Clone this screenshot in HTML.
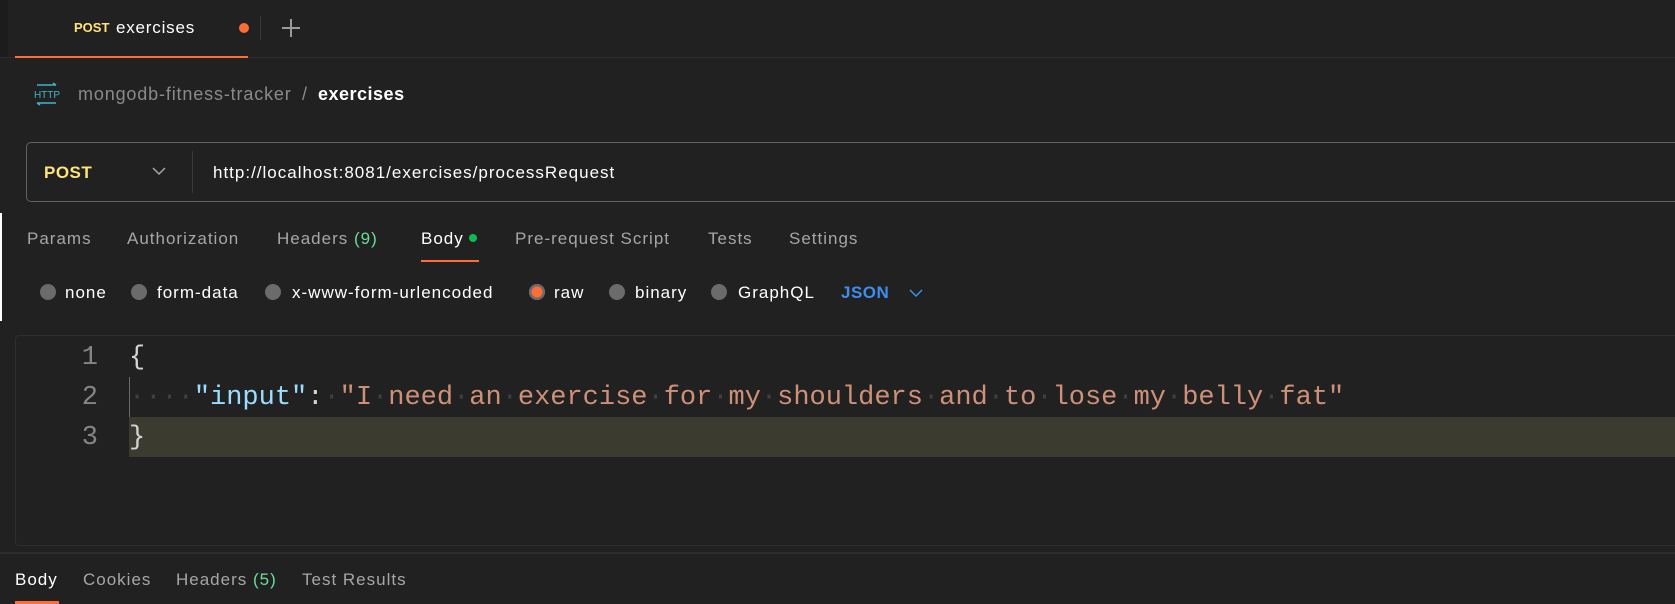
<!DOCTYPE html>
<html><head><meta charset="utf-8"><style>
body{margin:0;width:1675px;height:604px;background:#212121;position:relative;overflow:hidden;font-family:"Liberation Sans",sans-serif;color:#a6a6a6}
.a{position:absolute;white-space:nowrap;line-height:1}
.ui{font-size:17px;letter-spacing:1px}
.rad{position:absolute;width:16px;height:16px;border-radius:50%;background:#6b6b6b;top:284px}
.ln{position:absolute;font-family:"Liberation Mono",monospace;font-size:27px;color:#858585;width:40px;text-align:right;left:58px;line-height:40px}
.code{position:absolute;left:129px;font-family:"Liberation Mono",monospace;font-size:27px;line-height:40px;white-space:pre;color:#d4d4d4}
.d{color:#404040}
</style></head><body>
<div class="a" style="left:0;top:0;width:8px;height:57px;background:#1c1c1c"></div>
<div class="a" style="left:0;top:57px;width:1675px;height:1px;background:#2c2c2c"></div>
<div class="a" style="left:74px;top:21px;font-size:13px;font-weight:bold;color:#ffe47e">POST</div>
<div class="a" style="left:116px;top:19px;font-size:17px;color:#fff;letter-spacing:0.8px">exercises</div>
<div class="a" style="left:239px;top:23px;width:10px;height:10px;border-radius:50%;background:#ff6c37"></div>
<div class="a" style="left:260px;top:16px;width:1px;height:24px;background:#3a3a3a"></div>
<div class="a" style="left:282px;top:27px;width:18px;height:1.5px;background:#9a9a9a"></div>
<div class="a" style="left:290px;top:19px;width:1.5px;height:18px;background:#9a9a9a"></div>
<div class="a" style="left:15px;top:56px;width:233px;height:2px;background:#ff6c37"></div>
<svg class="a" style="left:33px;top:82px" width="28" height="24" viewBox="0 0 28 24"><g stroke="#3fb5c9" stroke-width="1.4" fill="none"><path d="M4 3H23M20 1l3 2"/><path d="M4 21H23M7 23l-3-2"/></g><text x="14" y="16" text-anchor="middle" font-family="Liberation Sans" font-size="10" fill="#3fb5c9">HTTP</text></svg>
<div class="a" style="left:78px;top:85px;font-size:18px;color:#8a8a8a;letter-spacing:0.85px">mongodb-fitness-tracker</div>
<div class="a" style="left:302px;top:85px;font-size:18px;color:#8a8a8a">/</div>
<div class="a" style="left:318px;top:85px;font-size:18px;font-weight:bold;color:#fff;letter-spacing:0.5px">exercises</div>
<div class="a" style="left:26px;top:142px;width:1700px;height:60px;border:1px solid #616161;border-radius:5px;box-sizing:border-box"></div>
<div class="a" style="left:44px;top:164px;font-size:17px;font-weight:bold;color:#ffe47e;letter-spacing:0.5px">POST</div>
<svg class="a" style="left:152px;top:167px" width="14" height="9"><path d="M1 1l6 6 6-6" stroke="#a6a6a6" stroke-width="1.5" fill="none"/></svg>
<div class="a" style="left:192px;top:151px;width:1px;height:42px;background:#3a3a3a"></div>
<div class="a" style="left:213px;top:164px;font-size:17px;color:#fff;letter-spacing:1px">http://localhost:8081/exercises/processRequest</div>
<div class="a" style="left:0;top:213px;width:2px;height:108px;background:#fff"></div>
<div class="a ui" style="left:27px;top:230px">Params</div>
<div class="a ui" style="left:127px;top:230px">Authorization</div>
<div class="a ui" style="left:277px;top:230px">Headers <span style="color:#6bdd9a">(9)</span></div>
<div class="a ui" style="left:421px;top:230px;color:#fff">Body</div>
<div class="a" style="left:469px;top:234px;width:8px;height:8px;border-radius:50%;background:#0cbb52"></div>
<div class="a ui" style="left:515px;top:230px">Pre-request Script</div>
<div class="a ui" style="left:708px;top:230px">Tests</div>
<div class="a ui" style="left:789px;top:230px">Settings</div>
<div class="a" style="left:421px;top:260px;width:58px;height:2px;background:#ff6c37"></div>
<div class="rad" style="left:40px"></div><div class="a ui" style="left:65px;top:284px;color:#fff">none</div>
<div class="rad" style="left:131px"></div><div class="a ui" style="left:157px;top:284px;color:#fff">form-data</div>
<div class="rad" style="left:265px"></div><div class="a ui" style="left:292px;top:284px;color:#fff">x-www-form-urlencoded</div>
<div class="rad" style="left:529px;background:#ff6c37;box-shadow:inset 0 0 0 2.5px #6b6b6b"></div><div class="a ui" style="left:554px;top:284px;color:#fff">raw</div>
<div class="rad" style="left:609px"></div><div class="a ui" style="left:635px;top:284px;color:#fff">binary</div>
<div class="rad" style="left:711px"></div><div class="a ui" style="left:738px;top:284px;color:#fff">GraphQL</div>
<div class="a ui" style="left:841px;top:284px;color:#3c8ef0;font-weight:bold;letter-spacing:0.5px">JSON</div>
<svg class="a" style="left:909px;top:289px" width="14" height="9"><path d="M1 1l6 6 6-6" stroke="#3c8ef0" stroke-width="1.5" fill="none"/></svg>
<div class="a" style="left:15px;top:335px;width:1700px;height:211px;border:1px solid #2e2e2e;border-radius:4px;box-sizing:border-box"></div>
<div class="a" style="left:129px;top:417px;width:1560px;height:40px;background:#3b3b30"></div>
<div class="a" style="left:129px;top:377px;width:1px;height:40px;background:#6a6a6a"></div>
<div class="ln" style="top:338px">1</div>
<div class="ln" style="top:378px">2</div>
<div class="ln" style="top:418px">3</div>
<div class="code" style="top:338px">{</div>
<div class="code" style="top:378px"><span class="d">····</span><span style="color:#9cdcfe">"input"</span>:<span class="d">·</span><span style="color:#ce9178">"I<span class="d">·</span>need<span class="d">·</span>an<span class="d">·</span>exercise<span class="d">·</span>for<span class="d">·</span>my<span class="d">·</span>shoulders<span class="d">·</span>and<span class="d">·</span>to<span class="d">·</span>lose<span class="d">·</span>my<span class="d">·</span>belly<span class="d">·</span>fat"</span></div>
<div class="code" style="top:418px">}</div>
<div class="a" style="left:0;top:552px;width:1675px;height:2px;background:#2c2c2c"></div>
<div class="a ui" style="left:15px;top:571px;color:#fff">Body</div>
<div class="a ui" style="left:83px;top:571px">Cookies</div>
<div class="a ui" style="left:176px;top:571px">Headers <span style="color:#6bdd9a">(5)</span></div>
<div class="a ui" style="left:302px;top:571px">Test Results</div>
<div class="a" style="left:15px;top:601px;width:44px;height:3px;background:#ff6c37"></div>
</body></html>
